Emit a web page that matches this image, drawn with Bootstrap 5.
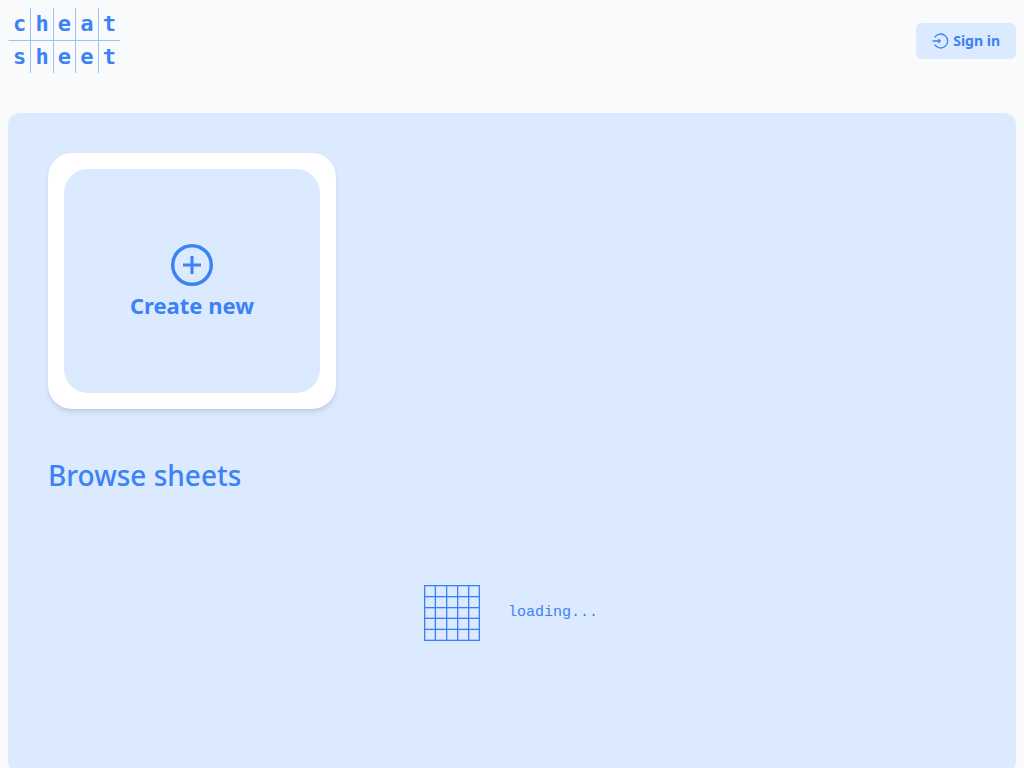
<!DOCTYPE html>
<html lang="en">
<head>
<meta charset="utf-8">
<meta name="viewport" content="width=device-width, initial-scale=1">
<title>Cheat sheet</title>
<link rel="stylesheet" href="https://cdn.jsdelivr.net/npm/bootstrap@5.3.0/dist/css/bootstrap.min.css">
<style>
  :root { --brand: #3b82f6; --pale: #dbeafe; --line: #93c5fd; }
  body { background: #f8fafc; color: var(--brand); font-family: "Noto Sans", "Open Sans", sans-serif; }
  .logo { display: grid; grid-template-columns: repeat(5, 1fr); width: 112px; color: var(--brand);
    font: 700 22px/32px "DejaVu Sans Mono", monospace; text-align: center; text-decoration: none; }
  .logo span { border-left: 1px solid var(--line); }
  .logo span:nth-child(5n+1) { border-left-color: transparent; }
  .logo span:nth-child(-n+5) { border-bottom: 1px solid var(--line); }
  .sign-in { --bs-btn-color: var(--brand); --bs-btn-bg: var(--pale); --bs-btn-hover-bg: #bfdbfe; --bs-btn-hover-color: var(--brand);
    height: 36px; font-size: 14px; font-weight: 700; border: 0; border-radius: 6px; }
  .panel { background: var(--pale); border-radius: 12px; margin-top: 40px; padding: 40px; }
  .sheet-card { width: 288px; height: 256px; border-radius: 24px; padding: 16px;
    box-shadow: 0 4px 6px -1px rgba(0,0,0,.1), 0 2px 4px -2px rgba(0,0,0,.1); }
  .create { background: var(--pale); color: var(--brand); border-radius: 24px; font-size: 22px; font-weight: 700; line-height: 32px; }
  .browse { font-size: 28px; font-weight: 500; line-height: 36px; margin: 48px 0 0; }
  .loading { height: 240px; gap: 28px; font: 15px/24px "Liberation Mono", monospace; padding-right: 2px; }
</style>
</head>
<body class="p-2">
<header class="d-flex justify-content-between align-items-center">
  <a class="logo" href="#" aria-label="Cheat sheet">
    <span>c</span><span>h</span><span>e</span><span>a</span><span>t</span>
    <span>s</span><span>h</span><span>e</span><span>e</span><span>t</span>
  </a>
  <button type="button" class="btn sign-in d-flex align-items-center gap-1 px-3 py-0">
    <svg width="17" height="16" viewBox="0 0 17 16" fill="none" stroke="currentColor" stroke-width="1.3" aria-hidden="true">
      <path d="M2.7 4.4A7 7 0 1 1 2.7 11.6M0.5 8H8M6.3 6.2 8.2 8 6.3 9.8"/>
    </svg>
    Sign in
  </button>
</header>
<main class="panel">
  <div class="sheet-card bg-white d-flex">
    <button type="button" class="btn create border-0 flex-fill d-flex flex-column align-items-center justify-content-center p-0">
      <svg width="48" height="48" viewBox="0 0 48 48" fill="none" stroke="currentColor" stroke-width="3.5" aria-hidden="true">
        <circle cx="24" cy="24" r="19.3"/><path d="M24 15v18M15 24h18" stroke-width="3"/>
      </svg>
      <span>Create new</span>
    </button>
  </div>
  <h1 class="browse">Browse sheets</h1>
  <div class="loading d-flex align-items-center justify-content-center" role="status">
    <svg width="56" height="56" viewBox="0 0 56 56" fill="none" stroke="currentColor" aria-hidden="true">
      <path d="M.5 0v56M11.5 0v56M22.5 0v56M33.5 0v56M44.5 0v56M55.5 0v56M0 .5h56M0 11.5h56M0 22.5h56M0 33.5h56M0 44.5h56M0 55.5h56"/>
      <path stroke-opacity=".3" d="M1.5 1v54M10.5 1v54M23.5 1v54M34.5 1v54M45.5 1v54M54.5 1v54M1 1.5h54M1 12.5h54M1 23.5h54M1 32.5h54M1 43.5h54M1 54.5h54"/>
    </svg>
    <span>loading...</span>
  </div>
</main>
<script src="https://cdn.jsdelivr.net/npm/bootstrap@5.3.0/dist/js/bootstrap.bundle.min.js"></script>
</body>
</html>
